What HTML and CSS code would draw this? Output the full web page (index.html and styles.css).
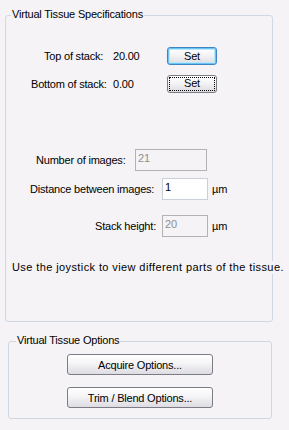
FILE: index.html
```html
<!DOCTYPE html>
<html lang="en">
<head>
  <meta charset="UTF-8">
  <meta name="viewport" content="width=device-width, initial-scale=1.0">
  <title>Virtual Tissue</title>
  <link rel="stylesheet" href="styles.css">
</head>
<body>
  <div class="dialog">
    <section class="group group-spec">
      <div class="group-title">Virtual Tissue Specifications</div>

      <div class="stack-row stack-top">
        <span class="stack-label">Top of stack:</span>
        <span class="stack-value">20.00</span>
        <button class="btn btn-set btn-default">Set</button>
      </div>
      <div class="stack-row stack-bottom">
        <span class="stack-label">Bottom of stack:</span>
        <span class="stack-value">0.00</span>
        <button class="btn btn-set btn-focus"><span class="focus-ring">Set</span></button>
      </div>

      <div class="field-row field-count">
        <label class="field-label">Number of images:</label>
        <input class="field field-wide" value="21" disabled>
      </div>
      <div class="field-row field-distance">
        <label class="field-label">Distance between images:</label>
        <input class="field field-narrow" value="1">
        <span class="unit">&micro;m</span>
      </div>
      <div class="field-row field-height">
        <label class="field-label">Stack height:</label>
        <input class="field field-narrow" value="20" disabled>
        <span class="unit">&micro;m</span>
      </div>

      <p class="hint">Use the joystick to view different parts of the tissue.</p>
    </section>

    <section class="group group-options">
      <div class="group-title">Virtual Tissue Options</div>
      <button class="btn btn-wide btn-acquire">Acquire Options...</button>
      <button class="btn btn-wide btn-trim">Trim / Blend Options...</button>
    </section>
  </div>
</body>
</html>
```

FILE: styles.css
```css
* {
  box-sizing: border-box;
}

body {
  margin: 0;
  background-color: #f5f3f6;
  font-family: "Liberation Sans", Arial, sans-serif;
  font-size: 11px;
  letter-spacing: -0.2px;
  color: #000;
}

.dialog {
  width: 289px;
  height: 430px;
  padding: 15px 0 0 5px;
}

/* group boxes */
.group {
  border: 1px solid #d0d7e5;
  border-radius: 3px;
}

.group-spec {
  width: 268px;
  height: 307px;
}

.group-options {
  width: 264px;
  height: 78px;
  margin: 19px 0 0 3px;
}

.group-title {
  width: fit-content;
  height: 13px;
  margin: -8px 0 0 5px;
  padding: 0 1px;
  line-height: 13px;
  background-color: #f5f3f6;
}

.group-options .group-title {
  margin-left: 7px;
}

/* top / bottom of stack */
.stack-row {
  display: grid;
  grid-template-columns: 107px 54px 50px;
  align-items: center;
  height: 18px;
}

.stack-top {
  margin-top: 26px;
}

.stack-bottom {
  margin-top: 10px;
}

.stack-top .stack-label {
  padding-left: 38px;
}

.stack-bottom .stack-label {
  padding-left: 25px;
}

/* input rows */
.field-row {
  display: flex;
  align-items: center;
  height: 22px;
}

.field-count {
  margin-top: 56px;
}

.field-distance {
  margin-top: 7px;
}

.field-height {
  margin-top: 15px;
}

.field-count .field-label {
  width: 129px;
  padding-left: 30px;
}

.field-distance .field-label {
  width: 156px;
  padding-left: 24px;
}

.field-height .field-label {
  width: 156px;
  padding-left: 89px;
}

.field {
  height: 22px;
  margin: 0;
  padding: 0 0 4px 2px;
  border: 1px solid #c9d0da;
  background-color: #fff;
  font: inherit;
  letter-spacing: inherit;
  color: #000;
}

.field:disabled {
  background-color: #f5f3f6;
  border-color: #b3b3b3;
  color: #8e8e8e;
}

.field-wide {
  width: 72px;
}

.field-narrow {
  width: 46px;
}

.unit {
  margin-left: 4px;
}

.hint {
  position: relative;
  width: 280px;
  margin: 24px 0 0 6px;
  line-height: 13px;
  letter-spacing: 0.4px;
  white-space: nowrap;
  background-color: #f5f3f6;
}

/* buttons */
.btn {
  padding: 0;
  border: 1px solid #7c7c84;
  border-radius: 3px;
  background: linear-gradient(#ffffff, #f4f4f6 45%, #dcdce2);
  font: inherit;
  letter-spacing: inherit;
  color: #000;
}

.btn-set {
  width: 50px;
  height: 18px;
}

.btn-default {
  border-color: #3d86c6;
  box-shadow: inset 0 0 0 1px #6cc4f3, inset 0 0 0 2px #bde6fb;
}

.btn-focus {
  display: flex;
  padding: 2px;
}

.focus-ring {
  flex: 1;
  line-height: 10px;
  outline: 1px dotted #000;
}

.btn-wide {
  display: block;
  width: 146px;
  height: 21px;
  margin: 0 auto;
}

.btn-acquire {
  margin-top: 7px;
}

.btn-trim {
  margin-top: 12px;
}
```
